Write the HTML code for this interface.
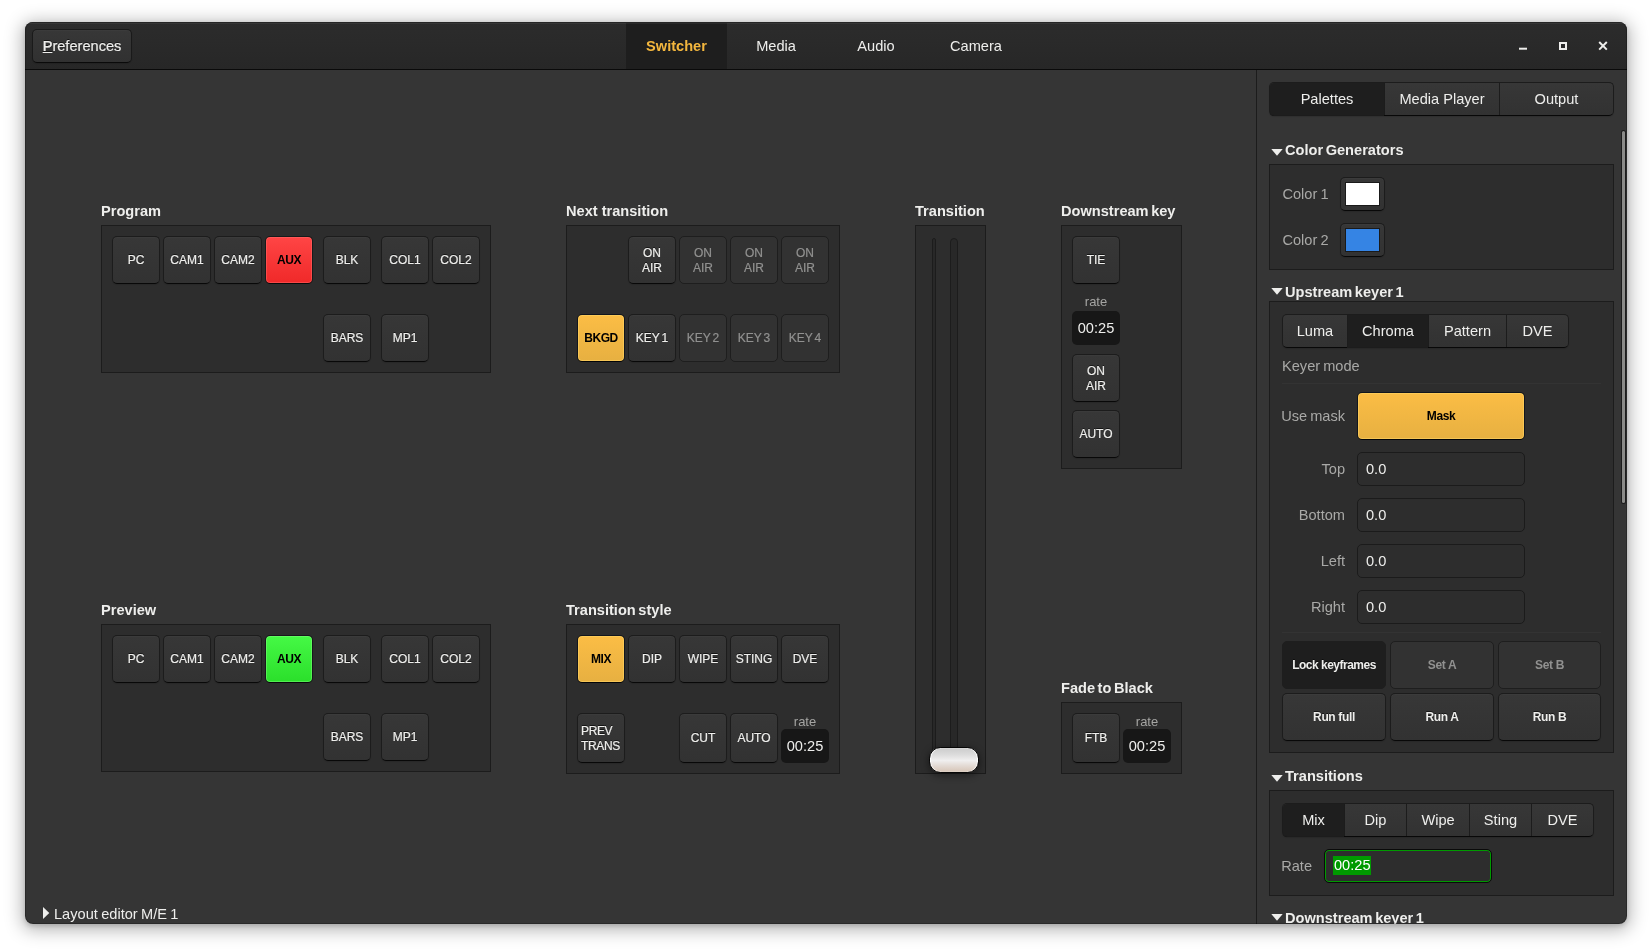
<!DOCTYPE html>
<html lang="en"><head><meta charset="utf-8"><title>Switcher</title>
<style>
html,body{margin:0;padding:0;}
body{width:1652px;height:952px;background:#fff;overflow:hidden;position:relative;
 font-family:"Liberation Sans","DejaVu Sans",sans-serif;font-size:14.6px;color:#eeeeec;}
#win{position:absolute;left:25px;top:22px;width:1602px;height:902px;border-radius:8px;
 background:#353535;overflow:hidden;}
#shadow{position:absolute;left:25px;top:22px;width:1602px;height:902px;border-radius:8px;
 box-shadow:0 3px 18px 3px rgba(0,0,0,.29),0 2px 5px rgba(0,0,0,.16);}
#ring{position:absolute;left:25px;top:22px;width:1602px;height:902px;border-radius:8px;border:1px solid rgba(0,0,0,.22);border-top-color:rgba(0,0,0,.13);box-sizing:border-box;pointer-events:none;}
#c{position:absolute;left:-25px;top:-22px;width:1652px;height:952px;will-change:transform;}
#c *{box-sizing:border-box;}
.a{position:absolute;}
.hdr{left:25px;top:22px;width:1602px;height:48px;background:linear-gradient(#2c2c2c,#272727);border-bottom:1px solid #0a0a0a;}
.hl{left:25px;top:23px;width:1602px;height:1px;background:rgba(255,255,255,.055);}
.t{position:absolute;white-space:nowrap;display:flex;align-items:center;justify-content:center;line-height:1;padding-top:2px;}
.tl{justify-content:flex-start;}
.tr{justify-content:flex-end;}
.b{font-weight:bold;word-spacing:-1.5px;}
.btn{position:absolute;border:1px solid #1c1c1c;border-bottom-color:#080808;border-radius:5px;
 background:linear-gradient(#373737,#323232);box-shadow:0 1px 1px rgba(0,0,0,.12),inset 0 1px rgba(255,255,255,.025);
 display:flex;align-items:center;justify-content:center;text-align:center;white-space:nowrap;
 font-size:12px;line-height:15px;color:#eeeeec;text-shadow:0 -1px rgba(0,0,0,.6);-webkit-text-stroke:0.2px;}
.btn.dis{background:#323232;color:#919190;box-shadow:none;border-color:#1e1e1e;text-shadow:none;}
.btn.red{background:linear-gradient(#ff4545,#f02929);border-color:#151b1b;border-bottom-color:#070b0b;box-shadow:inset 0 0 0 1px rgba(255,110,110,.45);color:#000;text-shadow:none;font-weight:bold;-webkit-text-stroke:0;letter-spacing:-0.4px;}
.btn.grn{background:linear-gradient(#45f945,#2bdf2b);border-color:#1a141c;border-bottom-color:#0a070b;box-shadow:inset 0 0 0 1px rgba(130,255,130,.45);color:#000;text-shadow:none;font-weight:bold;-webkit-text-stroke:0;letter-spacing:-0.4px;}
.btn.yel{background:linear-gradient(#fbbd45,#e7b041);border-color:#12161d;border-bottom-color:#020408;box-shadow:inset 0 0 0 1px rgba(255,212,100,.6);color:#000;text-shadow:none;font-weight:bold;-webkit-text-stroke:0;letter-spacing:-0.4px;}
.btn.chk{background:#1e1e1e;border-color:#1e1e1e;box-shadow:none;font-weight:bold;}
.btn.sb{font-weight:bold;font-size:12px;-webkit-text-stroke:0;letter-spacing:-0.35px;}
.panel{position:absolute;background:#2d2d2d;border:1px solid #1c1c1c;}
.rate{position:absolute;background:#171717;border-radius:5px;display:flex;align-items:center;justify-content:center;font-size:14.6px;color:#eeeeec;}
.dim{color:#a5a5a3;}
.lbl{color:#a9a9a7;word-spacing:-1px;}
.entry{position:absolute;background:#2d2d2d;border:1px solid #1b1b1b;border-radius:5px;display:flex;align-items:center;padding-left:8px;font-size:14.6px;}
.seg{position:absolute;display:flex;border:1px solid #1c1c1c;border-bottom-color:#080808;border-radius:5px;
 background:linear-gradient(#373737,#323232);box-shadow:0 1px 1px rgba(0,0,0,.12);}
.seg>div{height:100%;display:flex;align-items:center;justify-content:center;border-left:1px solid #1c1c1c;font-size:14.6px;}
.seg>div:first-child{border-left:none;}
.seg>div.on{background:#1e1e1e;box-shadow:0 1px 0 #1c1c1c;}
.seg>div:first-child{border-radius:4px 0 0 4px;}
.seg>div:last-child{border-radius:0 4px 4px 0;}
.sep{position:absolute;height:1px;background:#333333;}
</style></head>
<body>
<div id="shadow"></div>
<div id="win"><div id="c">
<div class="a hdr" style="left:25px;top:22px;width:1602px;height:48px;"></div>
<div class="btn" style="left:32px;top:29px;width:100px;height:34px;font-size:14.6px;background:linear-gradient(#373737,#313131);border-color:#1a1a1a;border-bottom-color:#0a0a0a;"><span><u>P</u>references</span></div>
<div class="a" style="left:626px;top:23px;width:101px;height:46px;background:#1e1e1e;"></div>
<div class="a hl" style="left:25px;top:23px;width:1602px;height:1px;"></div>
<div class="t b" style="left:626px;top:22px;width:101px;height:47px;color:#f4b73e;">Switcher</div>
<div class="t" style="left:726px;top:22px;width:100px;height:47px;">Media</div>
<div class="t" style="left:826px;top:22px;width:100px;height:47px;">Audio</div>
<div class="t" style="left:926px;top:22px;width:100px;height:47px;">Camera</div>
<svg class="a" style="left:1510px;top:34px" width="110" height="24" viewBox="0 0 110 24"><rect x="9" y="13.7" width="8" height="2" fill="#eeeeec"/><rect x="50" y="9" width="6" height="6" fill="none" stroke="#eeeeec" stroke-width="2"/><path d="M89.2 8 L96.8 15.6 M96.8 8 L89.2 15.6" stroke="#eeeeec" stroke-width="2" fill="none"/></svg>
<div class="t tl b" style="left:101px;top:198px;width:300px;height:24px;">Program</div>
<div class="t tl b" style="left:566px;top:198px;width:300px;height:24px;word-spacing:0;">Next transition</div>
<div class="t tl b" style="left:915px;top:198px;width:300px;height:24px;">Transition</div>
<div class="t tl b" style="left:1061px;top:198px;width:300px;height:24px;">Downstream key</div>
<div class="t tl b" style="left:101px;top:597px;width:300px;height:24px;">Preview</div>
<div class="t tl b" style="left:566px;top:597px;width:300px;height:24px;">Transition style</div>
<div class="t tl b" style="left:1061px;top:675px;width:300px;height:24px;">Fade to Black</div>
<div class="panel" style="left:101px;top:225px;width:390px;height:148px;"></div>
<div class="btn" style="left:112px;top:236px;width:48px;height:48px;">PC</div>
<div class="btn" style="left:163px;top:236px;width:48px;height:48px;">CAM1</div>
<div class="btn" style="left:214px;top:236px;width:48px;height:48px;">CAM2</div>
<div class="btn red" style="left:265px;top:236px;width:48px;height:48px;">AUX</div>
<div class="btn" style="left:323px;top:236px;width:48px;height:48px;">BLK</div>
<div class="btn" style="left:381px;top:236px;width:48px;height:48px;">COL1</div>
<div class="btn" style="left:432px;top:236px;width:48px;height:48px;">COL2</div>
<div class="btn" style="left:323px;top:314px;width:48px;height:48px;">BARS</div>
<div class="btn" style="left:381px;top:314px;width:48px;height:48px;">MP1</div>
<div class="panel" style="left:101px;top:624px;width:390px;height:148px;"></div>
<div class="btn" style="left:112px;top:635px;width:48px;height:48px;">PC</div>
<div class="btn" style="left:163px;top:635px;width:48px;height:48px;">CAM1</div>
<div class="btn" style="left:214px;top:635px;width:48px;height:48px;">CAM2</div>
<div class="btn grn" style="left:265px;top:635px;width:48px;height:48px;">AUX</div>
<div class="btn" style="left:323px;top:635px;width:48px;height:48px;">BLK</div>
<div class="btn" style="left:381px;top:635px;width:48px;height:48px;">COL1</div>
<div class="btn" style="left:432px;top:635px;width:48px;height:48px;">COL2</div>
<div class="btn" style="left:323px;top:713px;width:48px;height:48px;">BARS</div>
<div class="btn" style="left:381px;top:713px;width:48px;height:48px;">MP1</div>
<div class="panel" style="left:566px;top:225px;width:274px;height:148px;"></div>
<div class="btn" style="left:628px;top:236px;width:48px;height:48px;padding-top:2px;">ON<br>AIR</div>
<div class="btn dis" style="left:679px;top:236px;width:48px;height:48px;padding-top:2px;">ON<br>AIR</div>
<div class="btn dis" style="left:730px;top:236px;width:48px;height:48px;padding-top:2px;">ON<br>AIR</div>
<div class="btn dis" style="left:781px;top:236px;width:48px;height:48px;padding-top:2px;">ON<br>AIR</div>
<div class="btn yel" style="left:577px;top:314px;width:48px;height:48px;">BKGD</div>
<div class="btn" style="left:628px;top:314px;width:48px;height:48px;word-spacing:-1.3px;">KEY 1</div>
<div class="btn dis" style="left:679px;top:314px;width:48px;height:48px;word-spacing:-1.3px;">KEY 2</div>
<div class="btn dis" style="left:730px;top:314px;width:48px;height:48px;word-spacing:-1.3px;">KEY 3</div>
<div class="btn dis" style="left:781px;top:314px;width:48px;height:48px;word-spacing:-1.3px;">KEY 4</div>
<div class="panel" style="left:566px;top:624px;width:274px;height:150px;"></div>
<div class="btn yel" style="left:577px;top:635px;width:48px;height:48px;">MIX</div>
<div class="btn" style="left:628px;top:635px;width:48px;height:48px;">DIP</div>
<div class="btn" style="left:679px;top:635px;width:48px;height:48px;">WIPE</div>
<div class="btn" style="left:730px;top:635px;width:48px;height:48px;">STING</div>
<div class="btn" style="left:781px;top:635px;width:48px;height:48px;">DVE</div>
<div class="btn" style="left:577px;top:713px;width:48px;height:50px;text-align:left;justify-content:flex-start;padding-left:3px;letter-spacing:-0.35px;padding-top:2px;">PREV<br>TRANS</div>
<div class="btn" style="left:679px;top:713px;width:48px;height:50px;">CUT</div>
<div class="btn" style="left:730px;top:713px;width:48px;height:50px;">AUTO</div>
<div class="t dim" style="left:781px;top:712px;width:48px;height:16px;font-size:13px;">rate</div>
<div class="rate" style="left:781px;top:729px;width:48px;height:34px;">00:25</div>
<div class="panel" style="left:915px;top:225px;width:71px;height:549px;"></div>
<div class="a" style="left:932px;top:238px;width:4px;height:525px;background:#282828;border:1px solid #1c1c1c;border-radius:2px;"></div>
<div class="a" style="left:950px;top:238px;width:8px;height:525px;background:#282828;border:1px solid #1c1c1c;border-radius:4px;"></div>
<div class="a" style="left:929px;top:747px;width:50px;height:26px;border:1px solid #060606;border-radius:11.5px;background:linear-gradient(#cccccc 0%,#dcdcdc 28%,#f0efef 52%,#e4dcd6 72%,#d6c4b6 100%);box-shadow:inset 1px 0 1px rgba(255,255,255,.9),inset -1px 0 1px rgba(255,255,255,.9),0 2px 7px 1px rgba(0,0,0,.4);"></div>
<div class="panel" style="left:1061px;top:225px;width:121px;height:244px;"></div>
<div class="btn" style="left:1072px;top:236px;width:48px;height:48px;">TIE</div>
<div class="t dim" style="left:1072px;top:292px;width:48px;height:16px;font-size:13px;">rate</div>
<div class="rate" style="left:1072px;top:311px;width:48px;height:34px;">00:25</div>
<div class="btn" style="left:1072px;top:354px;width:48px;height:48px;padding-top:2px;">ON<br>AIR</div>
<div class="btn" style="left:1072px;top:410px;width:48px;height:48px;">AUTO</div>
<div class="panel" style="left:1061px;top:702px;width:121px;height:72px;"></div>
<div class="btn" style="left:1072px;top:713px;width:48px;height:50px;">FTB</div>
<div class="t dim" style="left:1123px;top:712px;width:48px;height:16px;font-size:13px;">rate</div>
<div class="rate" style="left:1123px;top:729px;width:48px;height:34px;">00:25</div>
<svg class="a" style="left:42px;top:907px" width="8" height="12"><path d="M1 0 L7.3 6 L1 12 Z" fill="#eeeeec"/></svg>
<div class="t tl" style="left:54px;top:901px;width:200px;height:24px;word-spacing:-0.7px;">Layout editor M/E 1</div>
<div class="a" style="left:1256px;top:70px;width:1px;height:860px;background:#1c1c1c;"></div>
<div class="seg" style="left:1269px;top:82px;width:345px;height:34px;"><div class="on" style="width:114px">Palettes</div><div style="width:115px">Media Player</div><div style="width:114px">Output</div></div>
<div class="a" style="left:1622px;top:131px;width:3px;height:372px;background:#8b8b89;border-radius:2px;box-shadow:0 0 0 1px #1c1c1c;"></div>
<svg class="a" style="left:1271px;top:149px" width="12" height="7"><path d="M0.3 0 L11.7 0 L6 6.7 Z" fill="#eeeeec"/></svg>
<div class="t tl b" style="left:1285px;top:137px;width:300px;height:24px;">Color Generators</div>
<div class="panel" style="left:1269px;top:164px;width:345px;height:106px;"></div>
<div class="t tr lbl" style="left:1270px;top:181px;width:58.5px;height:24px;">Color 1</div>
<div class="t tr lbl" style="left:1270px;top:227px;width:58.5px;height:24px;">Color 2</div>
<div class="btn" style="left:1340px;top:177px;width:45px;height:34px;"><div style="width:35px;height:24px;background:#fff;border:1px solid #1a1a1a"></div></div>
<div class="btn" style="left:1340px;top:223px;width:45px;height:34px;"><div style="width:35px;height:24px;background:#3584e4;border:1px solid #1a1a1a"></div></div>
<svg class="a" style="left:1271px;top:288px" width="12" height="7"><path d="M0.3 0 L11.7 0 L6 6.7 Z" fill="#eeeeec"/></svg>
<div class="t tl b" style="left:1285px;top:279px;width:300px;height:24px;">Upstream keyer 1</div>
<div class="panel" style="left:1269px;top:301px;width:345px;height:452px;"></div>
<div class="seg" style="left:1282px;top:314px;width:287px;height:34px;"><div style="width:64px">Luma</div><div class="on" style="width:81px">Chroma</div><div style="width:78px">Pattern</div><div style="width:62px">DVE</div></div>
<div class="t tl lbl" style="left:1282px;top:353px;width:200px;height:24px;">Keyer mode</div>
<div class="sep" style="left:1282px;top:383px;width:319px;height:1px;"></div>
<div class="t tr lbl" style="left:1270px;top:403px;width:75px;height:24px;">Use mask</div>
<div class="btn yel" style="left:1357px;top:392px;width:168px;height:48px;font-size:12px;">Mask</div>
<div class="t tr lbl" style="left:1270px;top:456px;width:75px;height:24px;">Top</div>
<div class="entry" style="left:1357px;top:452px;width:168px;height:34px;">0.0</div>
<div class="t tr lbl" style="left:1270px;top:502px;width:75px;height:24px;">Bottom</div>
<div class="entry" style="left:1357px;top:498px;width:168px;height:34px;">0.0</div>
<div class="t tr lbl" style="left:1270px;top:548px;width:75px;height:24px;">Left</div>
<div class="entry" style="left:1357px;top:544px;width:168px;height:34px;">0.0</div>
<div class="t tr lbl" style="left:1270px;top:594px;width:75px;height:24px;">Right</div>
<div class="entry" style="left:1357px;top:590px;width:168px;height:34px;">0.0</div>
<div class="sep" style="left:1282px;top:632px;width:319px;height:1px;"></div>
<div class="btn sb chk" style="left:1282px;top:641px;width:104px;height:48px;letter-spacing:-0.5px;">Lock keyframes</div>
<div class="btn sb dis" style="left:1390px;top:641px;width:104px;height:48px;">Set A</div>
<div class="btn sb dis" style="left:1498px;top:641px;width:103px;height:48px;">Set B</div>
<div class="btn sb" style="left:1282px;top:693px;width:104px;height:48px;">Run full</div>
<div class="btn sb" style="left:1390px;top:693px;width:104px;height:48px;">Run A</div>
<div class="btn sb" style="left:1498px;top:693px;width:103px;height:48px;">Run B</div>
<svg class="a" style="left:1271px;top:775px" width="12" height="7"><path d="M0.3 0 L11.7 0 L6 6.7 Z" fill="#eeeeec"/></svg>
<div class="t tl b" style="left:1285px;top:763px;width:300px;height:24px;">Transitions</div>
<div class="panel" style="left:1269px;top:790px;width:345px;height:106px;"></div>
<div class="seg" style="left:1282px;top:803px;width:312px;height:34px;"><div class="on" style="width:61px">Mix</div><div style="width:62px">Dip</div><div style="width:63px">Wipe</div><div style="width:62px">Sting</div><div style="width:62px">DVE</div></div>
<div class="t tr lbl" style="left:1270px;top:853px;width:42px;height:24px;">Rate</div>
<div class="entry" style="left:1324px;top:849px;width:168px;height:34px;border-color:#0a0a0a;box-shadow:inset 0 0 0 1px #009a00;"><span style="display:block;width:38px;height:19px;line-height:19px;background:#009a00;color:#fff;padding-left:1px;position:relative;top:-1px;">00:25</span></div>
<svg class="a" style="left:1271px;top:914px" width="12" height="7"><path d="M0.3 0 L11.7 0 L6 6.7 Z" fill="#eeeeec"/></svg>
<div class="t tl b" style="left:1285px;top:905px;width:300px;height:24px;">Downstream keyer 1</div>
</div></div>
<div id="ring"></div>
</body></html>
